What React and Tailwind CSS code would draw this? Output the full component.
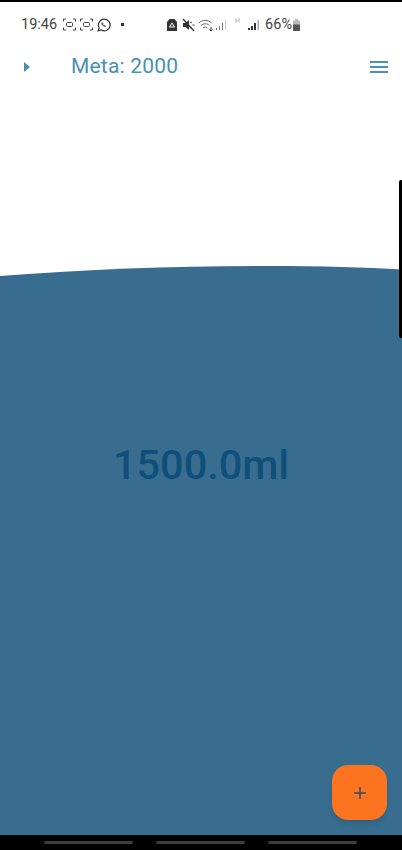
import { Plus } from 'lucide-react';

function FocusIcon() {
  return (
    <svg width="13" height="13" viewBox="0 0 13 13" fill="none" stroke="#444" strokeWidth="1">
      <path d="M.5 3.500V1H3M10 1h2.500v2.500M12.500 9.500V12H10M3 12H.5V9.500" />
      <rect x="3.500" y="4.500" width="6" height="4" rx="1" />
    </svg>
  );
}

function StatusBar() {
  return (
    <div className="flex h-[45px] items-center justify-between pl-[21px] pr-[101px] text-[14.500px] text-[#444]">
      <div className="flex items-center">
        <span className="mr-[6px]">19:46</span>
        <FocusIcon />
        <span className="w-[4px]" />
        <FocusIcon />
        <span className="w-[4px]" />
        <svg width="14" height="14" viewBox="0 0 14 14" fill="none" stroke="#333" strokeWidth="1.200">
          <path d="M1.200 12.800l.9-3.200A5.800 5.800 0 1 1 4.400 12z" />
          <path d="M5 4.500c-.6.8-.2 2 .8 3s2.200 1.400 3 .8l-1-1-.7.4-1.500-1.500.4-.7z" fill="#333" strokeWidth="0.400" />
        </svg>
        <span className="ml-[10px] h-[3px] w-[3px] bg-[#333]" />
      </div>
      <div className="flex items-center">
        <svg width="10" height="14" viewBox="0 0 10 14" className="mr-[5px]">
          <path d="M2.500 1h5L10 4v9H0V4z" fill="#333" />
          <path d="M5 5l2.500 4h-5z" fill="none" stroke="#fff" strokeWidth="1" />
        </svg>
        <svg width="13" height="14" viewBox="0 0 13 14" className="mr-[3px]" fill="#333">
          <path d="M1 5h2.500L7 2v10L3.500 9H1z" />
          <path d="M8.500 4l1 1M10.500 7h2M8.500 10l1-1" stroke="#333" strokeWidth="1.200" />
          <path d="M1 1l11 12" stroke="#333" strokeWidth="1.200" />
        </svg>
        <svg width="17" height="14" viewBox="0 0 17 14" fill="none" stroke="#666" strokeWidth="1">
          <path d="M1 5c3.500-3.500 9-3.500 12.500 0M3 7.500c2.500-2.300 6-2.300 8.500 0M5 10c1.500-1.200 3-1.200 4.500 0" />
          <path d="M13 9v4M11.500 11.500L13 13l1.500-1.500" stroke="#333" />
        </svg>
        <svg width="11" height="12" viewBox="0 0 11 12" fill="#777" className="mr-[9px]">
          <path d="M1 9h1v2H1zM4 7h1v4H4zM7 4h1v7H7z" />
          <path d="M10 1h1v10h-1z" fill="#ccc" />
        </svg>
        <span className="mb-[7px] w-[6px] text-[7px] leading-none text-[#aaa]">H</span>
        <svg width="11" height="12" viewBox="0 0 11 12" className="ml-[7px] mr-[6px]">
          <path d="M0 9h2v2H0zM3 7h2v4H3zM6 4h2v7H6z" fill="#333" />
          <path d="M9.500 1H11v10H9.500z" fill="#aaa" />
        </svg>
        <span>66%</span>
        <svg width="9" height="14" viewBox="0 0 9 14">
          <path d="M3 1h3v1.500h2V13H1V2.500h2z" fill="#bbb" />
          <path d="M1 6.500h7V13H1z" fill="#555" />
        </svg>
      </div>
    </div>
  );
}

function Header() {
  return (
    <div className="flex h-[40px] items-center pl-[24px] pr-[14px] text-[#4a8fb5]">
      <svg width="6" height="10" viewBox="0 0 6 10" fill="currentColor">
        <path d="M0 0l6 5-6 5z" />
      </svg>
      <span className="ml-[41px] flex-1 text-[21px] tracking-[0.2px]">Meta: 2000</span>
      <svg width="18" height="12" viewBox="0 0 18 12" fill="currentColor">
        <path d="M0 0h18v2H0zM0 5h18v2H0zM0 10h18v2H0z" />
      </svg>
    </div>
  );
}

export default function App() {
  return (
    <div className="relative flex h-[850px] w-[402px] flex-col overflow-hidden bg-white [font-family:Roboto,sans-serif]">
      <div className="h-[2px] shrink-0 bg-black" />
      <StatusBar />
      <Header />
      <div className="flex-1" />
      <svg width="402" height="11" viewBox="0 0 402 11" className="block shrink-0" preserveAspectRatio="none">
        <path d="M0 10C90 3 180 0 270 0c50 0 95 1.500 132 3.500V11H0z" fill="#386d8f" />
      </svg>
      <div className="flex h-[558px] shrink-0 justify-center bg-[#386d8f] pt-[163px]">
        <span className="h-fit text-[41.500px] font-medium leading-[50px] text-[#0f4f7a]">1500.0ml</span>
      </div>
      <div className="flex h-[15px] shrink-0 items-center justify-center gap-[23px] bg-black pr-[2px]">
        <div className="h-[3px] w-[89px] rounded-full bg-[#3c3c3c]" />
        <div className="h-[3px] w-[89px] rounded-full bg-[#3c3c3c]" />
        <div className="h-[3px] w-[89px] rounded-full bg-[#3c3c3c]" />
      </div>
      <div className="absolute bottom-[30px] right-[15px] flex h-[55px] w-[55px] items-center justify-center rounded-[16px] bg-[#fc7320] shadow-md">
        <Plus size={18} strokeWidth={2} color="#2b4a66" />
      </div>
      <div className="absolute right-0 top-[180px] h-[158px] w-[3px] rounded-l-[2px] bg-black" />
    </div>
  );
}
